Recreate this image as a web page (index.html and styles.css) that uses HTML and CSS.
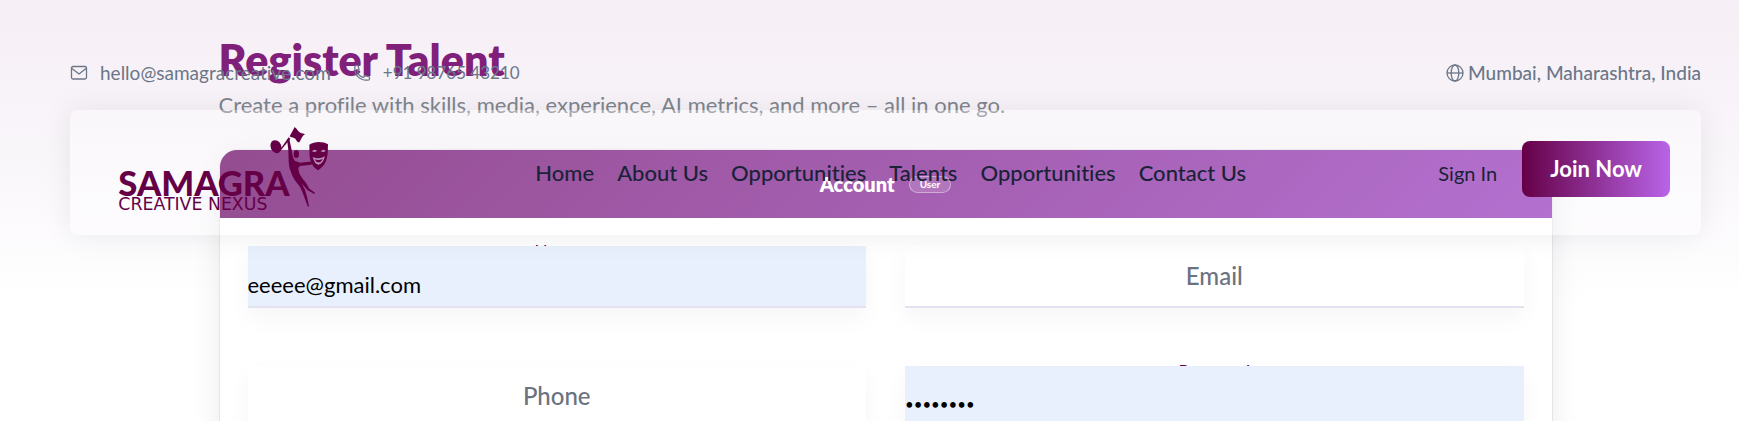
FILE: index.html
```html
<!DOCTYPE html>
<html lang="en">
<head>
    <meta charset="UTF-8">
    <meta name="viewport" content="width=device-width, initial-scale=1.0">
    <title>Register Talent - Samagra Creative Nexus</title>
    <link rel="stylesheet" href="styles.css">
</head>
<body>
    <header class="site-header">
        <div class="topbar">
            <div class="topbar-contact">
                <a href="mailto:hello@samagracreative.com">
                    <svg class="icon" viewBox="0 0 18 18"><rect x="1.5" y="2.5" width="15" height="12.5" rx="1.5"/><path d="M2 4.500l7 5.500 7-5.500"/></svg>
                    hello@samagracreative.com
                </a>
                <a class="phone" href="tel:+919876543210">
                    <svg class="icon" viewBox="0 0 24 24"><path stroke-width="1.700" d="M2.500 6.500c0 8.300 6.700 15 15 15H20a2 2 0 0 0 2-2v-1.600c0-.5-.4-1-.9-1.100l-4.500-1.100c-.4-.1-.9.1-1.200.4l-1 1.400c-.3.400-.8.500-1.200.4a12.500 12.500 0 0 1-7.400-7.400c-.2-.4 0-.9.400-1.200l1.300-1c.4-.3.600-.7.500-1.200L6.800 2.700c-.1-.5-.6-.8-1.100-.8H4.500a2 2 0 0 0-2 2z"/></svg>
                    +91 98765 43210
                </a>
            </div>
            <div class="topbar-location">
                <svg class="icon" viewBox="0 0 18 18"><circle cx="9" cy="9" r="8"/><ellipse cx="9" cy="9" rx="3.800" ry="8"/><path d="M1 9h16"/></svg>
                Mumbai, Maharashtra, India
            </div>
        </div>

        <nav class="navbar">
            <a class="logo" href="#" aria-label="Samagra Creative Nexus">
                <svg viewBox="174 78 639 255">
                    <text class="logo-name" x="175" y="288">SAMAGRA</text>
                    <text class="logo-sub" x="175" y="330">CREATIVE NEXUS</text>
                    <!-- dancer -->
                    <ellipse cx="709" cy="162" rx="8" ry="12"/>
                    <path d="M681 118L685 150L686 185Q687 205 694 220Q700 238 720 260Q730 280 736 300L744 321L747 319L741 290Q736 268 725 250L742 270L763 282L765 278L748 266Q740 248 728 236Q716 222 715 208Q715 201 720 198L754 194L757 190L755 186L748 185L720 188L704 182Q697 172 695 150L688 117z"/>
                    <!-- flag and maraca -->
                    <path d="M689 109l15-28c8 5 9 14 17 17 5 2 9 2 14 5-10 5-10 14-17 24-9 1-8-10-16-13-5-2-9-1-13-5z"/>
                    <ellipse cx="648" cy="140" rx="16" ry="20" transform="rotate(-25 648 140)"/>
                    <path d="M662 146l24-34 5 4-27 33z"/>
                    <!-- mask -->
                    <path d="M748 134c16-10 40-10 56-1-1 20 1 35-8 54-6 12-13 18-22 24-11-6-18-15-22-27-5-14-3-33-4-50z"/>
                    <path class="logo-cut" d="M756 154q7-9 15-1-7 5-15 1zM782 154q8-9 15-1-7 5-15 1zM758 171q19 9 37-2-7 25-20 25-11-1-17-23z"/>
                    <path d="M764 178q11 5 24-1-5 11-13 10-7 0-11-9z"/>
                </svg>
            </a>
            <ul class="nav-links">
                <li><a href="#">Home</a></li>
                <li><a href="#">About Us</a></li>
                <li><a href="#">Opportunities</a></li>
                <li><a href="#">Talents</a></li>
                <li><a href="#">Opportunities</a></li>
                <li><a href="#">Contact Us</a></li>
            </ul>
            <div class="nav-actions">
                <a class="sign-in" href="#">Sign In</a>
                <button class="join-btn" type="button">Join Now</button>
            </div>
        </nav>
    </header>

    <main class="container">
        <h1>Register Talent</h1>
        <p class="subtitle">Create a profile with skills, media, experience, AI metrics, and more – all in one go.</p>

        <form class="card">
            <div class="card-header">
                <h2>Account</h2>
                <span class="badge">User</span>
            </div>
            <div class="card-body">
                <div class="field filled">
                    <input type="text" id="name" value="eeeee@gmail.com">
                    <label for="name">Name</label>
                </div>
                <div class="field">
                    <input type="email" id="email">
                    <label for="email">Email</label>
                </div>
                <div class="field">
                    <input type="tel" id="phone">
                    <label for="phone">Phone</label>
                </div>
                <div class="field filled">
                    <input type="password" id="password" value="talent12">
                    <label for="password">Password</label>
                </div>
            </div>
        </form>
    </main>
</body>
</html>
```
FILE: styles.css
```css
* {
    box-sizing: border-box;
}

body {
    margin: 0;
    padding-left: 32px;
    font-family: Lato, sans-serif;
    font-size: 22px;
    line-height: 24px;
    font-variant-ligatures: none;
    color: #1a2238;
    background: linear-gradient(180deg, #f6eff5 0, #f8f4f9 120px, #fff 300px) no-repeat;
    overflow: hidden;
}

a {
    color: inherit;
    text-decoration: none;
}

/* Header floats over the page */
.site-header {
    position: absolute;
    top: 0;
    left: 32px;
    right: 0;
    z-index: 10;
    padding: 61px 38px 0;
}

.topbar {
    display: flex;
    justify-content: space-between;
    margin-bottom: 25px;
    font-size: 19px;
    color: #6b7688;
}

.topbar-contact {
    display: flex;
    gap: 22px;
}

.topbar-contact a {
    display: flex;
    align-items: center;
    gap: 12px;
}

.topbar-contact .phone {
    font-size: 17px;
}

.topbar-location {
    display: flex;
    align-items: center;
    gap: 4px;
    font-weight: 500;
}

.icon {
    width: 18px;
    height: 18px;
    fill: none;
    stroke: currentColor;
    stroke-width: 1.3;
    stroke-linejoin: round;
}

.navbar {
    display: flex;
    align-items: center;
    justify-content: space-between;
    padding: 16px 31px 24px 48px;
    border-radius: 8px;
    background: rgba(255, 255, 255, 0.3);
    box-shadow: 0 0 30px rgba(0, 0, 0, 0.08);
}

.logo svg {
    display: block;
    width: 213px;
    height: 85px;
    overflow: visible;
    fill: #650047;
}

.logo-name {
    font-size: 104px;
    font-weight: 900;
}

.logo-sub {
    font-family: "DejaVu Sans", sans-serif;
    font-size: 52px;
}

.logo-cut {
    fill: #b98bb8;
}

.nav-links {
    display: flex;
    gap: 23px;
    margin: 0;
    padding: 8px 0 0 12px;
    list-style: none;
    font-weight: 500;
}

.nav-actions {
    display: flex;
    align-items: center;
    gap: 25px;
}

.sign-in {
    padding-top: 8px;
    font-size: 20px;
}

.join-btn {
    height: 56px;
    padding: 0 28px;
    border: none;
    border-radius: 8px;
    background: linear-gradient(90deg, #650047, #b964e8);
    color: #fff;
    font-family: inherit;
    font-size: 22px;
    font-weight: 700;
    cursor: pointer;
}

/* Page content */
.container {
    max-width: 1398px;
    margin: 0 auto;
    padding: 36px 32px 0;
}

h1 {
    margin: 0;
    font-size: 43px;
    line-height: 48px;
    font-weight: 800;
    color: #80207a;
}

.subtitle {
    margin: 9px 0 32px;
    color: #7f858e;
}

.card {
    border: 1px solid #e4e4e8;
    border-radius: 18px;
    background: #fff;
    box-shadow: 0 8px 30px rgba(0, 0, 0, 0.08);
    overflow: hidden;
}

.card-header {
    display: flex;
    align-items: center;
    justify-content: center;
    gap: 14px;
    height: 68px;
    background: linear-gradient(135deg, #660060, #9333bb);
    color: #fff;
}

.card-header h2 {
    margin: 0;
    font-size: 20px;
    font-weight: 800;
}

.badge {
    padding: 0 10px;
    border: 1px solid rgba(255, 255, 255, 0.4);
    border-radius: 9px;
    background: rgba(255, 255, 255, 0.15);
    font-size: 10px;
    line-height: 15px;
    font-weight: 700;
}

.card-body {
    display: grid;
    grid-template-columns: 1fr 1fr;
    gap: 58px 39px;
    padding: 28px;
}

.field {
    position: relative;
    z-index: 0;
}

.field input {
    display: block;
    width: 100%;
    height: 62px;
    padding: 16px 0 0;
    border: none;
    border-bottom: 2px solid #e4e2ef;
    background: #fff;
    box-shadow: 0 10px 24px rgba(0, 0, 0, 0.04);
    color: #000;
    font-family: inherit;
    font-size: 22px;
}

.field input[type="password"] {
    font-size: 15px;
}

.field label {
    position: absolute;
    inset: 18px 0 auto;
    text-align: center;
    font-size: 24px;
    font-weight: 500;
    color: #6b7280;
    pointer-events: none;
}

.field.filled input {
    background: #e8f0fe;
}

.field.filled label {
    top: -6px;
    z-index: -1;
    font-size: 17px;
    color: #650047;
}
```
